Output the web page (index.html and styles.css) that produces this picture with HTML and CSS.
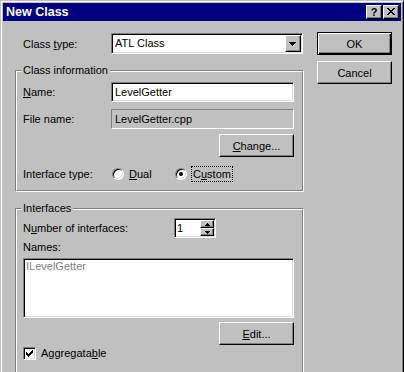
FILE: index.html
```html
<!DOCTYPE html>
<html>
<head>
<meta charset="utf-8">
<title>New Class</title>
<link rel="stylesheet" href="styles.css">
</head>
<body>
<div class="window">
  <div class="titlebar">
    <span class="title">New Class</span>
    <div class="tbtns">
      <span class="tbtn help">?</span>
      <span class="tbtn close"><svg width="8" height="7" viewBox="0 0 8 7" shape-rendering="crispEdges"><path d="M0 0h2v1h-2zM6 0h2v1h-2zM1 1h2v1h-2zM5 1h2v1h-2zM2 2h4v1h-4zM3 3h2v1h-2zM2 4h4v1h-4zM1 5h2v1h-2zM5 5h2v1h-2zM0 6h2v1h-2zM6 6h2v1h-2z" fill="#000"/></svg></span>
    </div>
  </div>
  <div class="client">
    <div class="main">
      <div class="row top-row">
        <span class="lbl">Class <u>t</u>ype:</span>
        <div class="combo">
          <span class="combo-text">ATL Class</span>
          <span class="dd"><svg width="7" height="4" viewBox="0 0 7 4" shape-rendering="crispEdges"><path d="M0 0h7v1h-1v1h-1v1h-1v1h-1v-1h-1v-1h-1v-1h-1z" fill="#000"/></svg></span>
        </div>
      </div>

      <div class="group g1">
        <div class="group-in">
          <div class="legend">Class information</div>
          <div class="row r-name">
            <span class="lbl"><u>N</u>ame:</span>
            <div class="edit">LevelGetter</div>
          </div>
          <div class="row r-file">
            <span class="lbl">File name:</span>
            <div class="edit ro">LevelGetter.cpp</div>
          </div>
          <div class="row r-change">
            <button class="btn"><u>C</u>hange...</button>
          </div>
          <div class="row r-iface">
            <span class="lbl">Interface type:</span>
            <div class="opt dual"><span class="radio"></span><span class="opt-text"><u>D</u>ual</span></div>
            <div class="opt custom"><span class="radio checked"><span class="dot"></span></span><span class="opt-text focus">C<u>u</u>stom</span></div>
          </div>
        </div>
      </div>

      <div class="group g2">
        <div class="group-in">
          <div class="legend">Interfaces</div>
          <div class="row r-num">
            <span class="lbl wide">N<u>u</u>mber of interfaces:</span>
            <div class="spin">
              <span class="spin-val">1</span>
              <span class="spin-btns">
                <span class="sb"><svg width="5" height="3" viewBox="0 0 5 3" shape-rendering="crispEdges"><path d="M2 0h1v1h1v1h1v1h-5v-1h1v-1h1z" fill="#000"/></svg></span>
                <span class="sb"><svg width="5" height="3" viewBox="0 0 5 3" shape-rendering="crispEdges"><path d="M0 0h5v1h-1v1h-1v1h-1v-1h-1v-1h-1z" fill="#000"/></svg></span>
              </span>
            </div>
          </div>
          <div class="names-lbl">Names:</div>
          <div class="list"><div class="list-item">ILevelGetter</div></div>
          <div class="row r-edit">
            <button class="btn"><u>E</u>dit...</button>
          </div>
          <div class="row r-check">
            <span class="check"><svg width="7" height="7" viewBox="0 0 7 7" shape-rendering="crispEdges"><path d="M0 2v3h1v1h1v1h1v-1h1v-1h1v-1h1v-1h1v-3h-1v1h-1v1h-1v1h-1v1h-1v-1h-1v-1z" fill="#000"/></svg></span>
            <span class="check-text">Aggregata<u>b</u>le</span>
          </div>
        </div>
      </div>
    </div>

    <div class="side">
      <button class="btn default">OK</button>
      <button class="btn cancel">Cancel</button>
    </div>
  </div>
</div>
</body>
</html>
```

FILE: styles.css
```css
* { box-sizing: border-box; }

html, body {
  margin: 0;
  padding: 0;
  height: 372px;
  overflow: hidden;
  background: #c0c0c0;
}

body {
  font-family: "Liberation Sans", Arial, sans-serif;
  font-size: 11px;
  color: #000;
}

u { text-decoration: underline; text-underline-offset: 1px; }

.window {
  width: 404px;
  height: 372px;
  overflow: hidden;
  border: 1px solid;
  border-color: #c0c0c0 #000 #000 #c0c0c0;
  border-bottom: 0;
  box-shadow: inset 1px 1px #fff, inset -1px 0 #808080;
  padding: 2px 2px 0 2px;
  background: #c0c0c0;
}

/* Title bar */
.titlebar {
  display: flex;
  align-items: center;
  height: 18px;
  background: #000080;
  color: #fff;
  padding: 0 2px 0 3px;
}
.title {
  flex: 1;
  font-weight: bold;
  font-size: 12.5px;
  line-height: 18px;
}
.tbtns { display: flex; gap: 1px; }
.tbtn {
  width: 16px;
  height: 14px;
  border: 1px solid;
  border-color: #fff #000 #000 #fff;
  box-shadow: inset -1px -1px #808080;
  background: #c0c0c0;
  color: #000;
  display: flex;
  align-items: center;
  justify-content: center;
  font-weight: bold;
  font-size: 11px;
  line-height: 12px;
}
.tbtn.close svg { margin: 0 1px 1px 0; }

/* Client */
.client {
  display: flex;
  padding-left: 12px;
}
.main {
  width: 289px;
  padding-top: 12px;
}
.side {
  margin-left: 13px;
  width: 75px;
  display: flex;
  flex-direction: column;
}

.row { display: flex; align-items: center; }
.lbl { width: 88px; flex: none; }
.lbl.wide { width: 151px; }

.top-row { padding-left: 8px; height: 21px; }

/* Buttons */
.btn {
  appearance: none;
  margin: 0;
  padding: 0;
  width: 75px;
  height: 23px;
  font: inherit;
  color: #000;
  background: #c0c0c0;
  border: 1px solid;
  border-color: #fff #000 #000 #fff;
  box-shadow: inset -1px -1px #808080;
}
.btn.default {
  margin-top: 11px;
  border-color: #000;
  box-shadow: inset 1px 1px #fff, inset -1px -1px #000, inset -2px -2px #808080;
}
.btn.cancel { margin-top: 6px; }

/* Sunken fields */
.combo, .edit, .spin, .list, .check {
  border: 1px solid;
  border-color: #808080 #fff #fff #808080;
  box-shadow: inset 1px 1px #000, inset -1px -1px #dfdfdf;
  background: #fff;
}

.combo {
  width: 192px;
  height: 21px;
  display: flex;
  align-items: center;
}
.combo-text { flex: 1; padding-left: 3px; line-height: 17px; }
.dd {
  width: 16px;
  height: 17px;
  margin-right: 1px;
  border: 1px solid;
  border-color: #fff #000 #000 #fff;
  box-shadow: inset -1px -1px #808080;
  background: #c0c0c0;
  display: flex;
  align-items: center;
  justify-content: center;
}
.dd svg { margin: 1px 1px 0 0; }

.edit {
  flex: 1;
  height: 20px;
  line-height: 18px;
  padding-left: 3px;
}
.edit.ro {
  background: #c0c0c0;
  box-shadow: none;
}

/* Group boxes */
.group {
  border: 1px solid;
  border-color: #808080 #fff #fff #808080;
}
.group-in {
  border: 1px solid;
  border-color: #fff #808080 #808080 #fff;
  padding: 0 8px 8px 6px;
}
.g1 { margin-top: 16px; }
.g2 { margin-top: 16px; }
.g2 .group-in { padding-bottom: 30px; }

.legend {
  width: fit-content;
  margin-top: -8px;
  margin-left: -2px;
  padding: 0 2px;
  line-height: 13px;
  height: 13px;
  background: #c0c0c0;
}

.r-name { margin-top: 5px; height: 20px; }
.r-file { margin-top: 7px; height: 20px; }
.r-change { margin-top: 5px; justify-content: flex-end; }
.r-iface { margin-top: 8px; height: 17px; }

/* Radios */
.opt { display: flex; align-items: center; }
.opt.dual { width: 63px; margin-left: 1px; }
.radio {
  width: 12px;
  height: 12px;
  flex: none;
  border-radius: 50%;
  border: 1px solid;
  border-color: #808080 #fff #fff #808080;
  box-shadow: inset 1px 1px #000, inset -1px -1px #dfdfdf;
  background: #fff;
  display: flex;
  align-items: center;
  justify-content: center;
}
.dot {
  width: 4px;
  height: 4px;
  border-radius: 50%;
  background: #000;
}
.opt-text { margin-left: 5px; line-height: 14px; }
.opt-text.focus {
  margin-left: 4px;
  border: 1px dotted #000;
  padding: 0 1px;
}

/* Interfaces group */
.r-num { margin-top: 3px; height: 20px; }
.spin {
  width: 42px;
  height: 20px;
  display: flex;
}
.spin-val { flex: 1; padding-left: 2px; line-height: 18px; }
.spin-btns {
  width: 14px;
  margin: 1px 1px 1px 0;
  display: flex;
  flex-direction: column;
}
.sb {
  height: 8px;
  border: 1px solid;
  border-color: #fff #000 #000 #fff;
  box-shadow: inset -1px -1px #808080;
  background: #c0c0c0;
  display: flex;
  align-items: center;
  justify-content: center;
}

.names-lbl { margin-top: 3px; line-height: 13px; height: 13px; }
.list {
  margin-top: 4px;
  height: 60px;
  padding: 1px 2px;
}
.list-item { color: #808080; line-height: 13px; }

.r-edit { margin-top: 4px; justify-content: flex-end; }

.r-check { margin-top: 2px; height: 13px; }
.check {
  width: 13px;
  height: 13px;
  flex: none;
  padding: 2px;
  display: flex;
}
.check svg { display: block; }
.check-text { margin-left: 5px; line-height: 13px; }
```
